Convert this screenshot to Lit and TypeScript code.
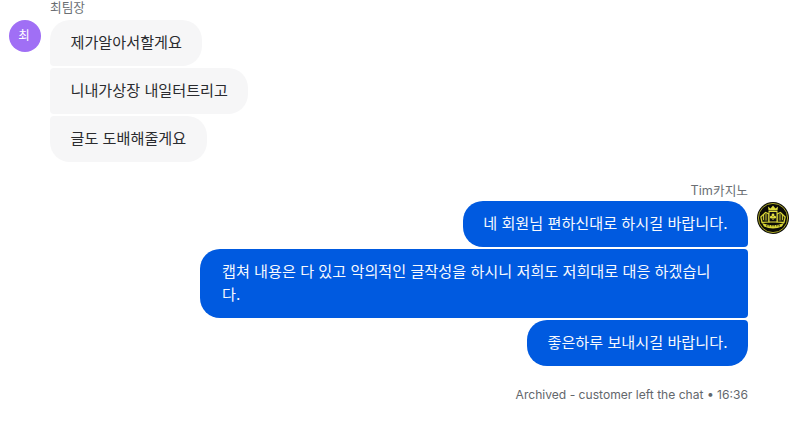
import { LitElement, html, css } from "lit";
import { customElement } from "lit/decorators.js";

@customElement("app-root")
export class AppRoot extends LitElement {
  static styles = css`
    :host {
      display: block;
      width: 800px;
      height: 422px;
      overflow: hidden;
      background: #fff;
      font-family: Inter, "Noto Sans CJK KR", sans-serif;
    }
    .chat { display: flex; flex-direction: column; padding: 0 11.5px 0 9px; }
    .group { display: grid; }
    .left { grid-template-columns: 32px 1fr; column-gap: 9px; }
    .right { grid-template-columns: 1fr 32px; margin-top: 19px; column-gap: 8.5px; }
    .name { font-size: 12.7px; color: #6b6f74; }
    .left .name { grid-column: 2; height: 20px; line-height: 15px; }
    .right .name { grid-column: 1; text-align: right; height: 20px; line-height: 20px; }
    .avatar {
      width: 32px; height: 32px; border-radius: 50%;
      display: flex; align-items: center; justify-content: center;
    }
    .letter {
      box-sizing: border-box; padding: 0 2px 3px 0;
      background: #a06ff5; color: #fff; font-size: 12.5px;
    }
    .logo { margin-top: 1px; }
    .bubbles { display: flex; flex-direction: column; gap: 2px; }
    .left .bubbles { align-items: flex-start; }
    .right .bubbles { align-items: flex-end; }
    .bubble {
      padding: 11px 20.5px 12px; font-size: 15.15px; line-height: 23px;
      box-sizing: border-box;
    }
    .in { background: #f6f6f7; color: #2a2b2f; }
    .in.first { border-radius: 20px 20px 20px 4px; }
    .in.mid { border-radius: 4px 20px 20px 4px; }
    .in.last { border-radius: 4px 20px 20px 20px; }
    .out { background: #005ae0; color: #f7f9fe; width: fit-content; max-width: 548px; }
    .out.first { border-radius: 20px 20px 4px 20px; }
    .out.mid { border-radius: 20px 4px 4px 20px; padding-left: 22px; padding-right: 22px; }
    .out.last { border-radius: 20px 4px 20px 20px; }
    .footer {
      margin-top: 20px; padding-right: 40.5px; text-align: right;
      font-size: 12.1px; line-height: 18px; color: #63676c;
    }
    svg { display: block; }
  `;

  render() {
    return html`
      <div class="chat">
        <div class="group left">
          <div class="name">최팀장</div>
          <div class="avatar letter">최</div>
          <div class="bubbles">
            <div class="bubble in first">제가알아서할게요</div>
            <div class="bubble in mid">니내가상장 내일터트리고</div>
            <div class="bubble in last">글도 도배해줄게요</div>
          </div>
        </div>
        <div class="group right">
          <div class="name">Tim카지노</div>
          <div></div>
          <div class="bubbles">
            <div class="bubble out first">네 회원님 편하신대로 하시길 바랍니다.</div>
            <div class="bubble out mid">캡쳐 내용은 다 있고 악의적인 글작성을 하시니 저희도 저희대로 대응 하겠습니다.</div>
            <div class="bubble out last">좋은하루 보내시길 바랍니다.</div>
          </div>
          <div class="avatar logo">
            <svg width="32" height="32" viewBox="0 0 32 32">
              <circle cx="16" cy="16" r="16" fill="#0b0b06" />
              <circle cx="16" cy="16" r="14.6" fill="none" stroke="#b9b62a" stroke-width="0.9" />
              <path d="M11.5 8.5 L11 4.5 L13.5 6.5 L16 3.5 L18.5 6.5 L21 4.5 L20.5 8.5 Z" fill="#dcd93a" />
              <path d="M3.8 15 L8.5 10.5 L12 12 L12 20 L5 20.5 Z" fill="#2a2a10" stroke="#d8d535" stroke-width="1.2" />
              <path d="M28.2 15 L23.5 10.5 L20 12 L20 20 L27 20.5 Z" fill="#2a2a10" stroke="#d8d535" stroke-width="1.2" />
              <rect x="12" y="9.5" width="8" height="10.5" fill="#111" stroke="#e4e040" stroke-width="1" />
              <circle cx="16" cy="13" r="1.4" fill="#e4e040" />
              <circle cx="14.4" cy="15.2" r="1.4" fill="#e4e040" />
              <circle cx="17.6" cy="15.2" r="1.4" fill="#e4e040" />
              <rect x="15.5" y="15" width="1" height="3" fill="#e4e040" />
              <path d="M6.5 12.5 L6.5 18 M9 12 L9 18.5 M23 12 L23 18.5 M25.5 12.5 L25.5 18" stroke="#e4e040" stroke-width="0.8" />
              <path d="M5 21 Q16 25.5 27 21 L25 24.5 Q16 28.5 7 24.5 Z" fill="#d8d535" />
              <path d="M9 23.8 L23 23.8" stroke="#0b0b06" stroke-width="0.8" stroke-dasharray="1.5 1" />
            </svg>
          </div>
        </div>
        <div class="footer">Archived - customer left the chat • 16:36</div>
      </div>
    `;
  }
}
